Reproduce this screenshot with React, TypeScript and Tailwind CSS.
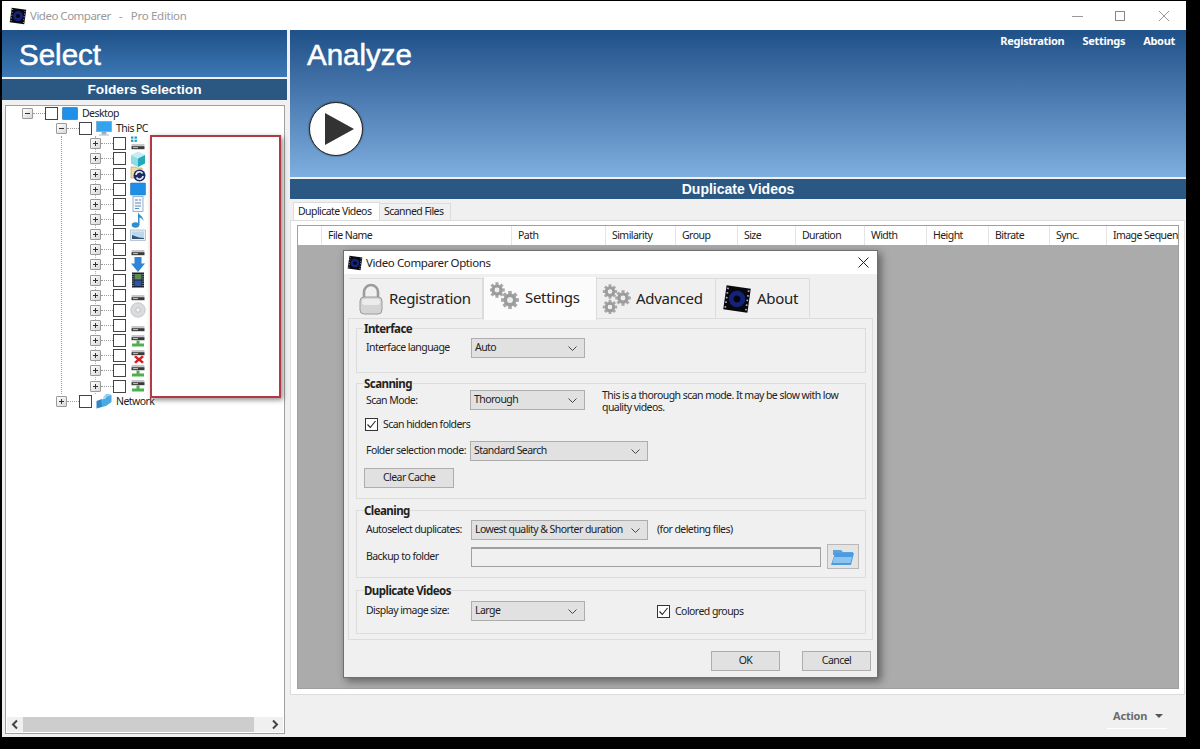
import type { ReactNode } from 'react';

const uiFont = "font-['Noto_Sans',sans-serif] tracking-[-0.55px] text-[10.5px]";
const arial = "font-['Liberation_Sans',Arial,sans-serif]";

const columns = [
  { name: 'File Name', width: 'w-[190px]' },
  { name: 'Path', width: 'w-[94px]' },
  { name: 'Similarity', width: 'w-[70px]' },
  { name: 'Group', width: 'w-[62px]' },
  { name: 'Size', width: 'w-[58px]' },
  { name: 'Duration', width: 'w-[69px]' },
  { name: 'Width', width: 'w-[62px]' },
  { name: 'Height', width: 'w-[62px]' },
  { name: 'Bitrate', width: 'w-[61px]' },
  { name: 'Sync.', width: 'w-[57px]' },
  { name: 'Image Sequence', width: 'w-[90px]' },
];

type DriveKind =
  | 'drive'
  | 'apps'
  | 'cube'
  | 'sync'
  | 'desktop'
  | 'doc'
  | 'music'
  | 'pics'
  | 'download'
  | 'film'
  | 'cd'
  | 'net'
  | 'netx';

const folders: DriveKind[] = [
  'apps', 'cube', 'sync', 'desktop', 'doc', 'music', 'pics', 'drive', 'download',
  'film', 'drive', 'cd', 'drive', 'net', 'netx', 'net', 'net',
];

function FilmLogo({ size = 16 }: { size?: number }) {
  return (
    <svg width={size} height={size} viewBox="0 0 16 16" className="shrink-0">
      <g transform="rotate(8 8 8)">
        <rect x="1.5" y="1.5" width="13" height="13" fill="#08080f" />
        <circle cx="8" cy="8" r="4.4" fill="#14227a" />
        <circle cx="8" cy="8" r="1.8" fill="#050510" />
        {[3, 5.5, 8, 10.5, 13].map((y) => (
          <g key={y} fill="#b9bccb">
            <rect x="2" y={y - 0.4} width="0.9" height="0.8" />
            <rect x="13.1" y={y - 0.4} width="0.9" height="0.8" />
          </g>
        ))}
      </g>
    </svg>
  );
}

function DriveGlyph({ y = 8 }: { y?: number }) {
  return (
    <g>
      <rect x="1.5" y={y} width="13" height="2.4" rx="0.8" fill="#c7c7c7" />
      <rect x="1.5" y={y + 2.2} width="13" height="3" fill="#3b3b3b" />
      <rect x="3" y={y + 3.2} width="5" height="0.9" fill="#d8d8d8" />
    </g>
  );
}

function TreeIcon({ kind }: { kind: DriveKind }) {
  return (
    <svg width="16" height="16" viewBox="0 0 16 16" className="shrink-0">
      {kind === 'drive' && <DriveGlyph y={8} />}
      {kind === 'apps' && (
        <>
          <rect x="1" y="0.5" width="2.4" height="2.2" fill="#18a0c8" />
          <rect x="4.5" y="0.5" width="2.4" height="2.2" fill="#18a0c8" />
          <rect x="1" y="3.7" width="2.4" height="2.2" fill="#18a0c8" />
          <rect x="4.5" y="3.7" width="2.4" height="2.2" fill="#18a0c8" />
          <DriveGlyph y={8} />
        </>
      )}
      {kind === 'cube' && (
        <>
          <path d="M1 4 8 .5l7 3.500-7 3.500z" fill="#c3edf2" />
          <path d="M1 4l7 3.500V16l-7-3.500z" fill="#8fdbe4" />
          <path d="M15 4 8 7.500V16l7-3.500z" fill="#23a9bd" />
        </>
      )}
      {kind === 'sync' && (
        <>
          <path d="M1 1h5l1 1h5v10H1z" fill="#f0dca6" stroke="#b59a5a" strokeWidth="0.6" />
          <circle cx="9.5" cy="9.5" r="6" fill="#1c2a66" />
          <path d="M6 9a3.500 3.500 0 0 1 6.500-1.500M13 10a3.500 3.500 0 0 1-6.500 1.500" fill="none" stroke="#e8edf7" strokeWidth="1.6" />
        </>
      )}
      {kind === 'desktop' && <rect x="0.5" y="2" width="15" height="12" rx="0.6" fill="#1e8fe6" stroke="#2a79b8" strokeWidth="0.6" />}
      {kind === 'doc' && (
        <>
          <rect x="3" y="0.5" width="10" height="15" fill="#f5f7fa" stroke="#7fa3c6" strokeWidth="0.8" />
          <path d="M5 4h3M9 4h2M5 7h6M5 10h6M5 12.500h4" stroke="#5a8bb8" strokeWidth="1" />
        </>
      )}
      {kind === 'music' && (
        <>
          <ellipse cx="5.500" cy="13" rx="3.800" ry="2.800" fill="#2f8fca" />
          <path d="M8 13V0c.5 3 5.500 4 5.500 9-1-2.500-3.500-3.500-4-3.500V13z" fill="#2f8fca" />
        </>
      )}
      {kind === 'pics' && (
        <>
          <rect x="0.5" y="3" width="15" height="10.500" fill="#e8eef4" stroke="#9fb3c6" strokeWidth="0.7" />
          <rect x="2" y="4.500" width="12" height="7.500" fill="#bcd8ee" />
          <path d="M2 12V8l4 1.500 3 1 5 .5v1z" fill="#32566f" />
        </>
      )}
      {kind === 'download' && <path d="M4.500 0h7v6.500H15L8 15 1 6.500h3.500z" fill="#2f86d6" />}
      {kind === 'film' && (
        <>
          <rect x="2" y="0.5" width="12" height="15" fill="#1b2333" />
          <rect x="4.500" y="2" width="7" height="5.500" fill="#5e8a4e" />
          <rect x="4.500" y="8.500" width="7" height="5.500" fill="#2c55a8" />
          <path d="M3 2v12M13 2v12" stroke="#c9d2de" strokeWidth="1" strokeDasharray="1 1.200" />
        </>
      )}
      {kind === 'cd' && (
        <>
          <circle cx="8" cy="8" r="7.300" fill="#d9dbdd" stroke="#b0b3b6" strokeWidth="0.6" />
          <circle cx="8" cy="8" r="2.200" fill="#f4f4f4" stroke="#aaa" strokeWidth="0.6" />
        </>
      )}
      {(kind === 'net' || kind === 'netx') && (
        <>
          <DriveGlyph y={2} />
          {kind === 'net' ? (
            <path d="M6.500 7.500h3v3h4.500v3H2v-3h4.500z" fill="#4caf50" />
          ) : (
            <path d="M6 7.500l3 2.500 3-2.500 2 1.500-3 2.500 3 2.500-2 1.500-3-2.500-3 2.500-2-1.500 3-2.500-3-2.500z" fill="#d62020" />
          )}
        </>
      )}
    </svg>
  );
}

function Expander({ open }: { open?: boolean }) {
  return (
    <span className="relative w-[11px] h-[11px] shrink-0 border border-[#9a9a9a] rounded-[1px] bg-gradient-to-br from-white to-[#d8d8d8] flex items-center justify-center">
      <span className="absolute w-[5px] h-px bg-[#333]" />
      {!open && <span className="absolute w-px h-[5px] bg-[#333]" />}
    </span>
  );
}

function TreeRow({ open, icon, label }: { open?: boolean; icon: ReactNode; label?: string }) {
  return (
    <div className="flex items-center h-[15.15px]">
      <Expander open={open} />
      <span className="w-[12px] border-t border-dotted border-[#9a9a9a]" />
      <span className="w-[13px] h-[13px] shrink-0 border border-[#444] bg-white" />
      <span className="ml-[4px] mr-[4px] flex items-center">{icon}</span>
      {label && <span className="leading-none text-[#222]">{label}</span>}
    </div>
  );
}

function DesktopIcon() {
  return (
    <svg width="16" height="14" viewBox="0 0 16 14">
      <rect x="0.5" y="0.5" width="15" height="12" rx="0.6" fill="#1e90e8" stroke="#2a79b8" strokeWidth="0.7" />
    </svg>
  );
}

function PcIcon() {
  return (
    <svg width="16" height="15" viewBox="0 0 16 15">
      <rect x="0.5" y="0.5" width="15" height="10" fill="#32a3ee" stroke="#7aa6c8" strokeWidth="0.8" />
      <path d="M6 11h4v2H6zM3 14h10" fill="#9fb8cc" stroke="#8ca4b8" strokeWidth="0.8" />
    </svg>
  );
}

function NetworkIcon() {
  return (
    <svg width="16" height="16" viewBox="0 0 16 16">
      <path d="M0.500 8 6 6v8l-5.500 1.500z" fill="#2f86c8" />
      <path d="M5 7l5-2V1l5.500 1v7L10 13l-4 1z" fill="#4aa8e2" />
      <path d="M10 1l5.500 1-5 2-4.500 2z" fill="#8fd0f2" />
    </svg>
  );
}

function Gear({ cx, cy, r }: { cx: number; cy: number; r: number }) {
  const teeth = [0, 45, 90, 135, 180, 225, 270, 315];
  return (
    <g>
      {teeth.map((a) => (
        <rect
          key={a}
          x={cx - r * 0.24}
          y={cy - r * 1.2}
          width={r * 0.48}
          height={r * 0.5}
          fill="#a8a8a8"
          transform={`rotate(${a} ${cx} ${cy})`}
        />
      ))}
      <circle cx={cx} cy={cy} r={r * 0.62} fill="none" stroke="#9c9c9c" strokeWidth={r * 0.48} />
      <circle cx={cx} cy={cy} r={r * 0.32} fill="#ededed" />
    </g>
  );
}

function Gears({ variant }: { variant: 'two' | 'three' }) {
  return (
    <svg width="30" height="30" viewBox="0 0 30 30" className="shrink-0">
      {variant === 'two' ? (
        <>
          <Gear cx={7} cy={8} r={6.5} />
          <Gear cx={20} cy={18} r={7.5} />
        </>
      ) : (
        <>
          <Gear cx={9} cy={7.5} r={6} />
          <Gear cx={22} cy={14} r={6.5} />
          <Gear cx={9} cy={23} r={6} />
        </>
      )}
    </svg>
  );
}

function LockIcon() {
  return (
    <svg width="26" height="32" viewBox="0 0 26 32" className="shrink-0">
      <path d="M6 15V9a7 7 0 0 1 14 0v6" fill="none" stroke="#9c9c9c" strokeWidth="2.6" />
      <rect x="2" y="14" width="22" height="17" rx="4" fill="#d4d4d4" stroke="#9a9a9a" />
      <rect x="4" y="16" width="18" height="6" rx="3" fill="#ececec" />
    </svg>
  );
}

function FolderIcon() {
  return (
    <svg width="26" height="18" viewBox="0 0 26 18">
      <path d="M3 2h8l2 2h10v3H3z" fill="#5ba3dc" />
      <path d="M5 5h19l-3 12H1z" fill="#4a9be0" />
      <path d="M4 9h18l-1.500 6H2.500z" fill="#8cc4ee" />
    </svg>
  );
}

function Select({ value, width }: { value: string; width: string }) {
  return (
    <div className={`${width} h-[20px] shrink-0 flex items-center justify-between pl-[3px] pr-[7px] bg-[#e1e1e1] border border-[#adadad] text-[#222] whitespace-nowrap`}>
      <span>{value}</span>
      <svg width="9" height="5" viewBox="0 0 9 5">
        <path d="M0.500 0.500 4.500 4.500 8.500 0.500" fill="none" stroke="#444" strokeWidth="1" />
      </svg>
    </div>
  );
}

function Checkbox({ label }: { label: string }) {
  return (
    <div className="flex items-center gap-[5px] h-[13px] leading-[13px] text-[#222] whitespace-nowrap">
      <span className="w-[13px] h-[13px] border border-[#333] bg-white flex items-center justify-center">
        <svg width="11" height="11" viewBox="0 0 11 11">
          <path d="M1.500 5.500 4.300 8.500 9.500 2" fill="none" stroke="#222" strokeWidth="1.1" />
        </svg>
      </span>
      {label}
    </div>
  );
}

function Group({ title, className, children }: { title: string; className: string; children: ReactNode }) {
  return (
    <div className={`border border-[#dcdcdc] pl-[9px] pr-[5px] ${className}`}>
      <div className="-mt-[8px] -ml-[2px] w-fit bg-[#f0f0f0] text-[11.5px] leading-[15px] font-bold text-[#222]">
        {title}
      </div>
      {children}
    </div>
  );
}

function OptionsTab({ active, icon, label, className }: { active?: boolean; icon: ReactNode; label: string; className: string }) {
  return (
    <div
      className={`${className} flex items-center gap-[5px] border-[#dcdcdc] text-[15px] tracking-[-0.3px] text-[#222] ${
        active
          ? 'h-[43px] -mt-[1px] bg-[#fbfbfb] pb-[3px] z-10 border-x'
          : 'h-[40px] bg-[#f0f0f0] border-t border-r'
      }`}
    >
      {icon}
      {label}
    </div>
  );
}

function OptionsDialog() {
  return (
    <div className={`${uiFont} absolute left-[343px] top-[250px] w-[535px] h-[428px] bg-[#f0f0f0] border border-[#6f6f6f] shadow-[3px_3px_8px_rgba(0,0,0,0.45)] flex flex-col`}>
      <div className="h-[23px] shrink-0 bg-white flex items-center pl-[3px] pr-[8px] text-[11.5px] tracking-[-0.4px] text-[#222]">
        <FilmLogo />
        <span className="ml-[3px] flex-1">Video Comparer Options</span>
        <svg width="11" height="11" viewBox="0 0 11 11">
          <path d="M0.500 0.500 10.500 10.500M10.500 0.500 0.500 10.500" stroke="#222" strokeWidth="1" />
        </svg>
      </div>

      <div className="flex items-start pl-[5px] mt-[4px] h-[40px] shrink-0">
        <OptionsTab icon={<LockIcon />} label="Registration" className="w-[134px] pl-[9px]" />
        <OptionsTab active icon={<Gears variant="two" />} label="Settings" className="w-[114px] pl-[6px]" />
        <OptionsTab icon={<Gears variant="three" />} label="Advanced" className="w-[119px] pl-[4px]" />
        <OptionsTab icon={<FilmLogo size={30} />} label="About" className="w-[94px] pl-[6px]" />
      </div>

      <div className="mx-[4px] h-[322px] border border-[#dcdcdc] bg-[#f0f0f0] pl-[7px] pr-[6px] pt-[9px] flex flex-col text-[#222]">
        <Group title="Interface" className="h-[45px] mb-[10px]">
          <div className="flex items-center mt-[2px]">
            <span className="w-[105px]">Interface language</span>
            <Select value="Auto" width="w-[114px]" />
          </div>
        </Group>

        <Group title="Scanning" className="h-[116px] mb-[11px]">
          <div className="flex items-start h-[20px] -mt-px">
            <span className="w-[104px] leading-[20px]">Scan Mode:</span>
            <Select value="Thorough" width="w-[115px]" />
            <p className="ml-[17px] w-[245px] leading-[12px] -mt-px">
              This is a thorough scan mode. It may be slow with low quality videos.
            </p>
          </div>
          <div className="mt-[8px] mb-[10px] -ml-px">
            <Checkbox label="Scan hidden folders" />
          </div>
          <div className="flex items-center">
            <span className="w-[104px] whitespace-nowrap">Folder selection mode:</span>
            <Select value="Standard Search" width="w-[178px]" />
          </div>
          <div className="mt-[7px] w-[90px] h-[20px] -ml-[2px] bg-[#e1e1e1] border border-[#adadad] flex items-center justify-center">
            Clear Cache
          </div>
        </Group>

        <Group title="Cleaning" className="h-[68px] mb-[12px]">
          <div className="flex items-center mt-[2px]">
            <span className="w-[105px] whitespace-nowrap">Autoselect duplicates:</span>
            <Select value="Lowest quality &amp; Shorter duration" width="w-[177px]" />
            <span className="ml-[9px]">(for deleting files)</span>
          </div>
          <div className="flex items-center mt-[4px]">
            <span className="w-[105px]">Backup to folder</span>
            <div className="w-[350px] h-[20px] border border-[#a0a0a0] border-t-2 bg-[#f0f0f0]" />
            <div className="ml-[6px] w-[32px] h-[25px] bg-[#e4e4e4] border border-[#b8b8b8] flex items-center justify-center">
              <FolderIcon />
            </div>
          </div>
        </Group>

        <Group title="Duplicate Videos" className="h-[44px]">
          <div className="flex items-center mt-[3px]">
            <span className="w-[105px] whitespace-nowrap">Display image size:</span>
            <Select value="Large" width="w-[114px]" />
            <span className="ml-[72px]">
              <Checkbox label="Colored groups" />
            </span>
          </div>
        </Group>
      </div>

      <div className="flex justify-end gap-[22px] pr-[6px] mt-[11px] text-[#222]">
        <div className="w-[69px] h-[20px] bg-[#e1e1e1] border border-[#adadad] flex items-center justify-center">OK</div>
        <div className="w-[69px] h-[20px] bg-[#e1e1e1] border border-[#adadad] flex items-center justify-center">Cancel</div>
      </div>
    </div>
  );
}

function FoldersPanel() {
  return (
    <aside className="w-[285px] shrink-0 flex flex-col bg-[#f0f0f0]">
      <div className="h-[47px] bg-gradient-to-b from-[#1f5088] to-[#3c79b5] flex items-center pl-[17px] pt-[3px]">
        <span className={`${arial} text-[29.5px] text-white [-webkit-text-stroke:0.5px_#fff] leading-none`}>Select</span>
      </div>
      <div className={`${arial} mt-[2px] h-[21px] pt-[1px] bg-[#2b5783] text-white text-[13.7px] font-bold flex items-center justify-center`}>
        Folders Selection
      </div>
      <div className="mt-[5px] ml-[3px] mr-[2px] h-[629px] bg-white border border-[#a0a0a0] flex flex-col">
        <div className={`${uiFont} flex-1 pl-[16px]`}>
          <TreeRow open icon={<DesktopIcon />} label="Desktop" />
          <div className="ml-[34px]">
            <TreeRow open icon={<PcIcon />} label="This PC" />
            <div className="ml-[5px] border-l border-dotted border-[#9a9a9a]">
              <div className="pl-[33px]">
                <div className="border-l border-dotted border-[#b0b0b0]">
                  <div className="-ml-[6px]">
                    {folders.map((kind, i) => (
                      <TreeRow key={i} icon={<TreeIcon kind={kind} />} />
                    ))}
                  </div>
                </div>
              </div>
            </div>
            <TreeRow icon={<NetworkIcon />} label="Network" />
          </div>
        </div>
        <div className="h-[15px] mb-[1px] mx-[1px] bg-[#f0f0f0] flex items-center">
          <svg width="16" height="15" viewBox="0 0 16 15" className="shrink-0">
            <path d="M10 3.500 6 7.500l4 4" fill="none" stroke="#444" strokeWidth="2" />
          </svg>
          <div className="w-[231px] h-[15px] bg-[#cdcdcd]" />
          <div className="flex-1" />
          <svg width="16" height="15" viewBox="0 0 16 15" className="shrink-0">
            <path d="M6 3.500l4 4-4 4" fill="none" stroke="#444" strokeWidth="2" />
          </svg>
        </div>
      </div>
    </aside>
  );
}

function ResultsPanel() {
  return (
    <section className="flex-1 min-w-0 flex flex-col bg-[#f0f0f0] ml-[3px]">
      <div className="h-[147px] bg-gradient-to-b from-[#1f5088] to-[#7fafe0] relative flex flex-col pl-[17px]">
        <div className={`${uiFont} absolute right-[11px] top-[3px] flex gap-[18px] font-bold text-[11px] !tracking-[-0.3px] text-white`}>
          <span>Registration</span>
          <span>Settings</span>
          <span>About</span>
        </div>
        <span className={`${arial} mt-[10px] text-[29.5px] text-white [-webkit-text-stroke:0.5px_#fff] leading-[30px]`}>Analyze</span>
        <div className="mt-[32px] ml-[2px] w-[54px] h-[54px] rounded-full bg-white border border-[#222] shadow-[0_0_2px_rgba(0,0,0,0.6)] flex items-center justify-center pl-[5px]">
          <svg width="32" height="34" viewBox="0 0 32 34">
            <path d="M2 1 31 17 2 33z" fill="#333" />
          </svg>
        </div>
      </div>
      <div className={`${arial} mt-[2px] h-[20px] bg-[#2b5783] text-white text-[14px] font-bold flex items-center justify-center`}>
        Duplicate Videos
      </div>
      <div className={`${uiFont} flex items-end h-[21px] pl-[3px] text-[#222] whitespace-nowrap`}>
        <span className="h-[18px] w-[87px] pl-[4px] bg-white border-x border-t border-[#dcdcdc] flex items-center">Duplicate Videos</span>
        <span className="h-[17px] w-[71px] pl-[4px] border-t border-r border-[#dcdcdc] flex items-center">Scanned Files</span>
      </div>
      <div className="h-[475px] bg-white border border-[#dcdcdc] pl-[6px] pr-[5px] pt-[4px] pb-[5px] mr-[1px]">
        <div className="h-full border border-[#a0a0a0] flex flex-col overflow-hidden bg-[#ababab]">
          <div className={`${uiFont} h-[19px] shrink-0 flex bg-white text-[#222] overflow-hidden`}>
            <div className="w-[24px] shrink-0 border-r border-[#e5e5e5]" />
            {columns.map((c) => (
              <div key={c.name} className={`${c.width} shrink-0 pl-[6px] flex items-center border-r border-[#e5e5e5] whitespace-nowrap`}>
                {c.name}
              </div>
            ))}
          </div>
        </div>
      </div>
      <div className="flex-1 flex items-start justify-end pr-[19px] pt-[13px]">
        <div className={`${uiFont} w-[60px] pb-[3px] pl-[6px] border-b border-white flex items-center justify-between pr-[4px] font-bold text-[11px] !tracking-[-0.2px] text-[#6b6b6b]`}>
          Action
          <span className="w-0 h-0 border-x-[4px] border-x-transparent border-t-[4px] border-t-[#555]" />
        </div>
      </div>
    </section>
  );
}

export default function App() {
  return (
    <div className="w-[1200px] h-[749px] bg-black pt-px pl-[2px] pr-[14px] pb-[12px]">
      <div className="relative w-full h-full bg-[#f0f0f0] flex flex-col overflow-hidden">
        <header className={`${uiFont} h-[29px] shrink-0 bg-white flex items-center pl-[7px] pr-[16px] text-[#999]`}>
          <FilmLogo size={18} />
          <span className="ml-[3px] text-[11.5px] tracking-[-0.5px]">Video Comparer</span>
          <span className="ml-[8px] text-[11.5px]">-</span>
          <span className="ml-[9px] flex-1 text-[11.5px] tracking-[-0.3px]">Pro Edition</span>
          <svg width="98" height="12" viewBox="0 0 98 12">
            <path d="M0 6.500H11" stroke="#999" />
            <rect x="43.500" y="1.500" width="9" height="9" fill="none" stroke="#888" />
            <path d="M87 1 97 11M97 1 87 11" stroke="#999" />
          </svg>
        </header>
        <div className="flex-1 flex min-h-0">
          <FoldersPanel />
          <ResultsPanel />
        </div>

        <div className="absolute left-[148px] top-[134px] w-[131px] h-[263px] bg-white border-2 border-[#b23a44] shadow-[2px_2px_5px_rgba(0,0,0,0.45)]" />
        <div className="absolute -left-[2px] -top-px">
          <OptionsDialog />
        </div>
      </div>
    </div>
  );
}
